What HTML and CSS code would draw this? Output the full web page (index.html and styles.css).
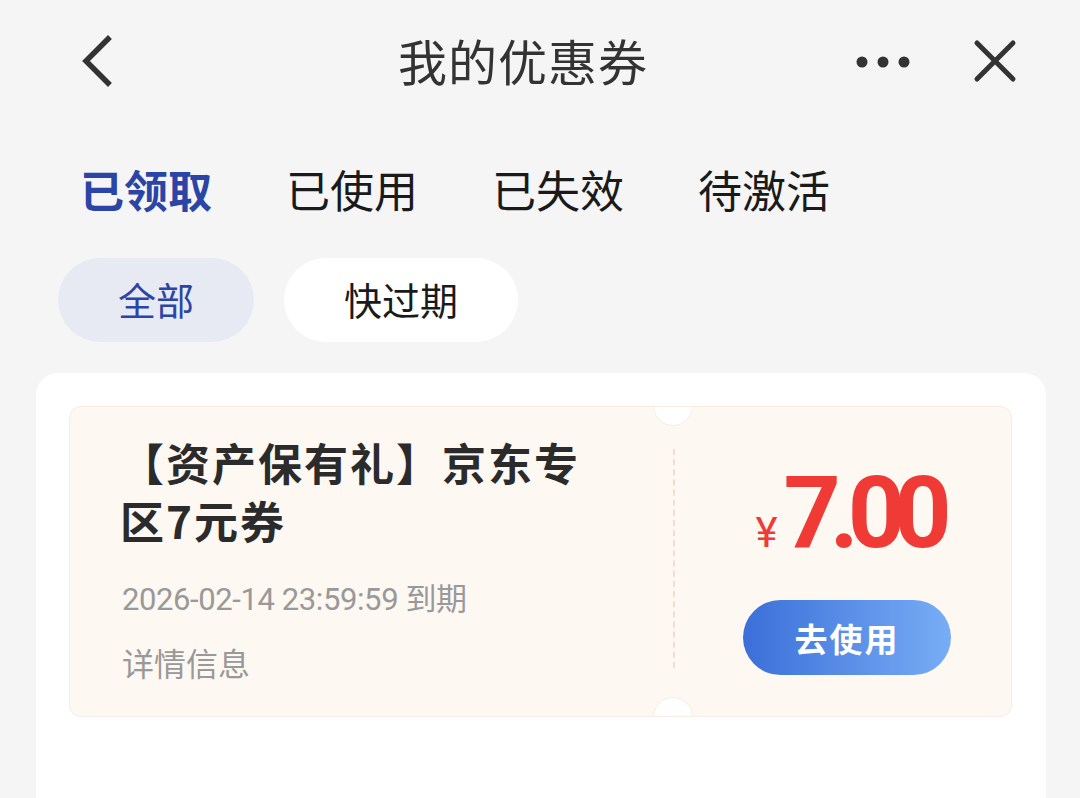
FILE: index.html
```html
<!DOCTYPE html>
<html lang="zh-CN">
<head>
  <meta charset="UTF-8">
  <title>我的优惠券</title>
  <link rel="stylesheet" href="styles.css">
</head>
<body>
  <!-- 顶部导航 -->
  <div class="nav">
    <div class="nav-left">
      <svg class="icon-back" width="40" height="52" viewBox="0 0 40 52">
        <polyline points="30,4 8,26 30,48" fill="none" stroke="#333" stroke-width="5.5" stroke-linecap="square" stroke-linejoin="miter"/>
      </svg>
    </div>
    <div class="nav-title">我的优惠券</div>
    <div class="nav-right">
      <svg class="icon-more" width="60" height="14" viewBox="0 0 60 14">
        <circle cx="8" cy="7" r="5.5" fill="#333"/>
        <circle cx="29" cy="7" r="5.5" fill="#333"/>
        <circle cx="50" cy="7" r="5.5" fill="#333"/>
      </svg>
      <svg class="icon-close" width="46" height="46" viewBox="0 0 46 46">
        <line x1="5" y1="5" x2="41" y2="41" stroke="#333" stroke-width="5" stroke-linecap="round"/>
        <line x1="41" y1="5" x2="5" y2="41" stroke="#333" stroke-width="5" stroke-linecap="round"/>
      </svg>
    </div>
  </div>

  <!-- 状态标签 -->
  <div class="tabs">
    <span class="tab activo">已领取</span>
    <span class="tab">已使用</span>
    <span class="tab">已失效</span>
    <span class="tab">待激活</span>
  </div>

  <!-- 筛选 -->
  <div class="chips">
    <span class="chip activo">全部</span>
    <span class="chip">快过期</span>
  </div>

  <!-- 列表 -->
  <div class="card">
    <div class="coupon">
      <div class="coupon-info">
        <div class="coupon-title">【资产保有礼】京东专区7元券</div>
        <div class="coupon-date">2026-02-14 23:59:59 到期</div>
        <div class="coupon-detail">详情信息</div>
      </div>
      <div class="coupon-side">
        <div class="price"><span class="yen">¥</span><span class="amount">7.00</span></div>
        <button class="btn-usar">去使用</button>
      </div>
    </div>
  </div>
</body>
</html>
```

FILE: styles.css
```css
* {
  margin: 0;
  padding: 0;
  box-sizing: border-box;
}
body {
  font-family: "Noto Sans CJK SC", "Noto Sans", sans-serif;
  background: #f5f5f5;
  color: #222;
  width: 1080px;
  height: 798px;
  overflow: hidden;
}
/* 顶部导航 */
.nav {
  height: 122px;
  display: grid;
  grid-template-columns: 1fr auto 1fr;
  align-items: center;
  padding: 0 62px 0 78px;
}
.nav-left {
  display: flex;
  align-items: center;
}
.nav-title {
  font-size: 49px;
  color: #333;
  letter-spacing: 1px;
  margin-right: 50px;
  margin-top: -4px;
}
.nav-right {
  display: flex;
  align-items: center;
  justify-content: flex-end;
  gap: 58px;
}
.icon-more {
  margin-top: 2px;
}
/* 状态标签 */
.tabs {
  display: flex;
  gap: 74px;
  padding-left: 80px;
  margin-top: 10px;
  height: 116px;
}
.tab {
  font-size: 44px;
  line-height: 116px;
  color: #1a1a1a;
  margin-top: -1px;
}
.tab.activo {
  color: #2a45a6;
  font-weight: bold;
}
/* 筛选 */
.chips {
  display: flex;
  gap: 30px;
  padding-left: 58px;
  margin-top: 10px;
}
.chip {
  height: 84px;
  line-height: 82px;
  border-radius: 42px;
  background: #fff;
  font-size: 38px;
  color: #1a1a1a;
  padding: 0 60px;
}
.chip.activo {
  background: #e8eaf3;
  color: #2a45a6;
}
/* 列表卡片 */
.card {
  margin: 31px 34px 0 36px;
  background: #fff;
  border-radius: 22px;
  padding: 33px 34px 0 33px;
  height: 460px;
}
.coupon {
  display: flex;
  height: 311px;
  background: #fef8f3;
  border: 1.5px solid #f9ebe1;
  border-radius: 12px;
  overflow: hidden;
}
.coupon-info {
  position: relative;
  width: 603px;
  padding: 26px 0 0 50px;
}
.coupon-title {
  width: 480px;
  font-size: 44px;
  line-height: 58px;
  font-weight: bold;
  letter-spacing: 2px;
  color: #2b2b2b;
}
.coupon-date {
  margin-top: 31px;
  font-size: 31px;
  line-height: 40px;
  color: #999;
  letter-spacing: -0.4px;
  font-family: Roboto, "Noto Sans CJK SC", sans-serif;
}
.coupon-date,
.coupon-detail {
  padding-left: 2px;
}
.coupon-detail {
  margin-top: 22px;
  font-size: 32px;
  line-height: 40px;
  color: #999;
}
/* 虚线 */
.coupon-info::after {
  content: "";
  position: absolute;
  right: -2px;
  top: 42px;
  bottom: 48px;
  border-right: 2px dashed #f4dccf;
}
.coupon-side {
  flex: 1;
  position: relative;
  display: flex;
  flex-direction: column;
  align-items: center;
  padding: 56px 0 0 10px;
}
/* 缺口 */
.coupon-side::before,
.coupon-side::after {
  content: "";
  position: absolute;
  left: -20px;
  width: 38px;
  height: 38px;
  border-radius: 50%;
  background: #fff;
  border: 1.5px solid #f9ebe1;
}
.coupon-side::before {
  top: -21px;
}
.coupon-side::after {
  bottom: -21px;
}
.price {
  color: #ef3a36;
  display: flex;
  align-items: baseline;
  height: 100px;
  line-height: 100px;
  margin-left: 2px;
}
.yen {
  font-size: 42px;
  margin-right: 6px;
  font-family: Roboto, sans-serif;
}
.amount {
  font-family: Roboto, sans-serif;
  font-size: 100px;
  font-weight: bold;
  letter-spacing: -11px;
}
.btn-usar {
  margin-top: 37px;
  width: 208px;
  height: 75px;
  border: none;
  border-radius: 38px;
  background: linear-gradient(90deg, #3b6fd8, #78adf6);
  color: #fff;
  font-family: "Noto Sans CJK SC", sans-serif;
  font-size: 33px;
  font-weight: bold;
  letter-spacing: 2px;
}
```
